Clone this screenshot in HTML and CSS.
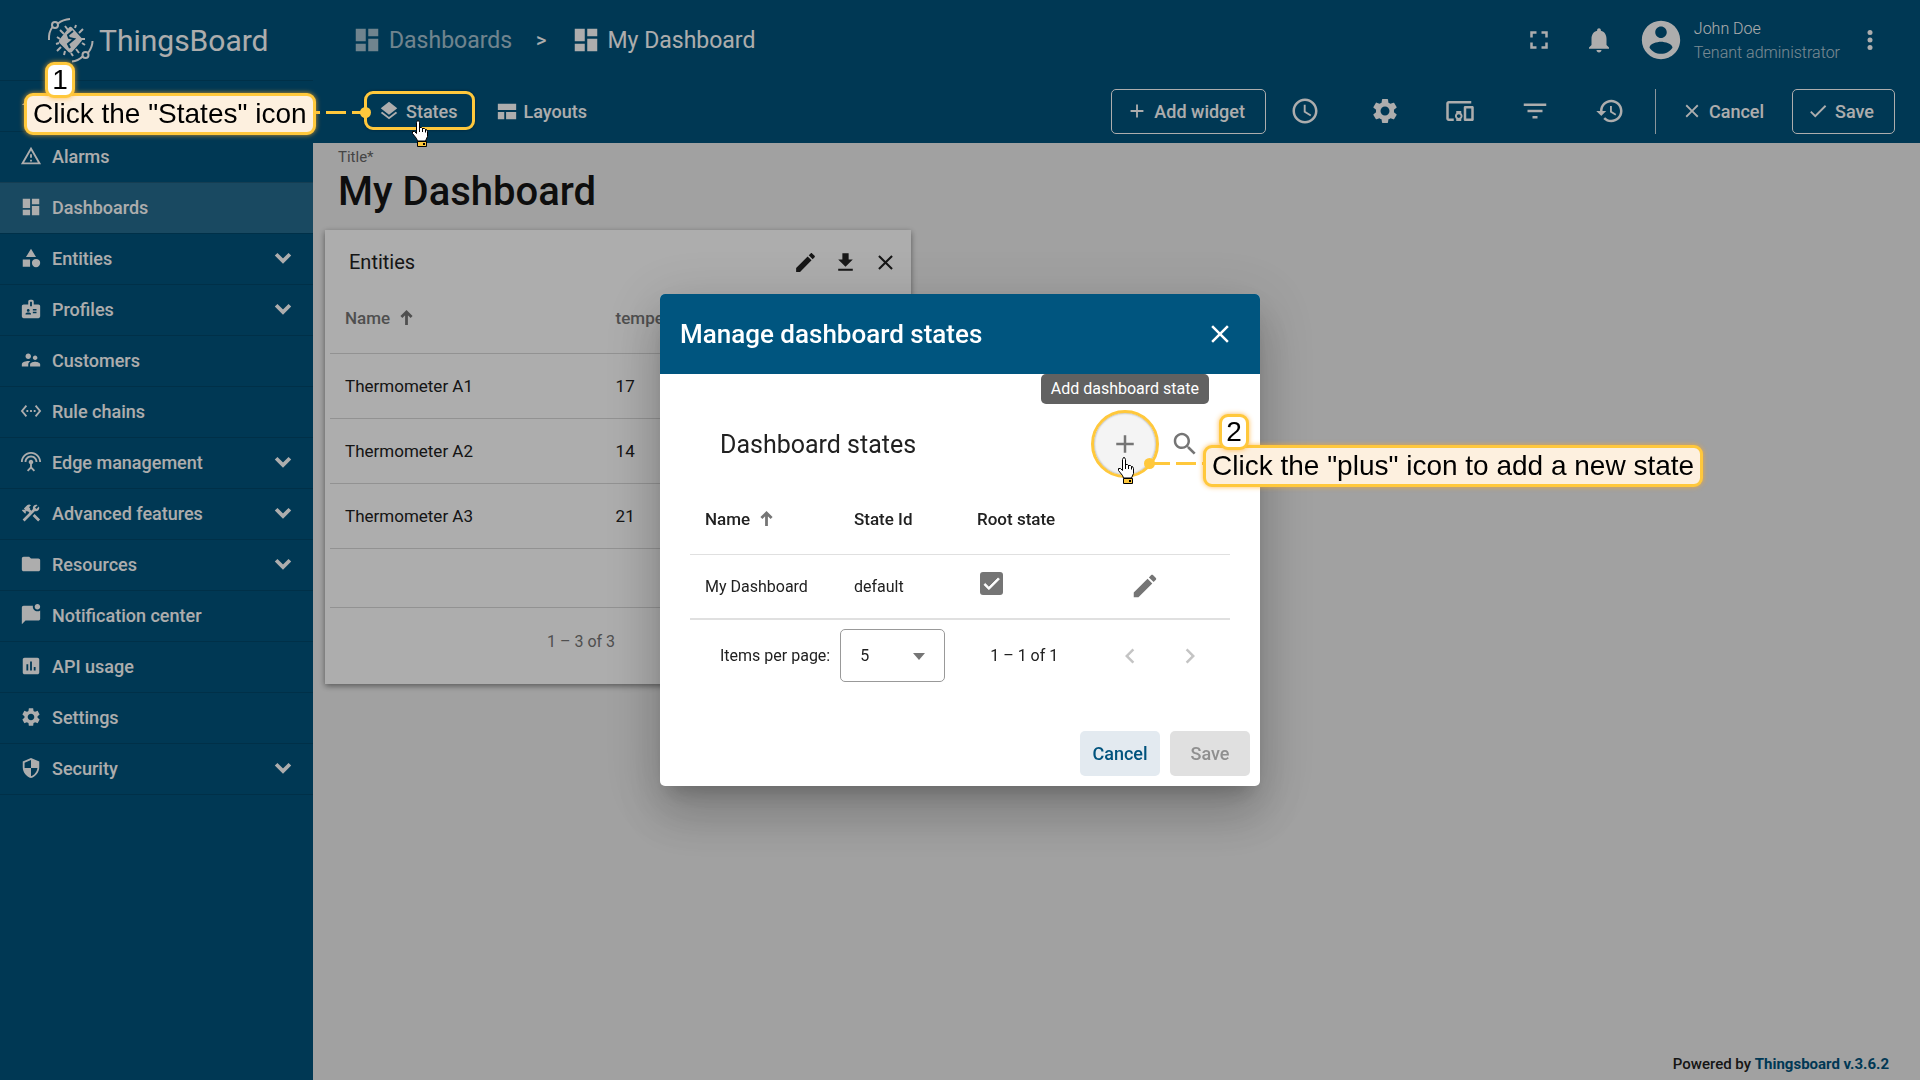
FILE: index.html
```html
<!DOCTYPE html>
<html lang="en">
<head>
  <meta charset="UTF-8">
  <meta name="viewport" content="width=device-width, initial-scale=1.0">
  <title>ThingsBoard | My Dashboard</title>
  <link rel="stylesheet" href="styles.css">
</head>
<body>

  <!-- icon sprite -->
  <svg class="sprite" aria-hidden="true">
    <symbol id="i-home" viewBox="0 0 24 24"><path d="M10 20v-6h4v6h5v-8h3L12 3 2 12h3v8z"/></symbol>
    <symbol id="i-alarm" viewBox="0 0 24 24"><path d="M12 5.99L19.53 19H4.47L12 5.99M12 2L1 21h22L12 2zm1 14h-2v2h2v-2zm0-6h-2v4h2v-4z"/></symbol>
    <symbol id="i-dashboard" viewBox="0 0 24 24"><path d="M3 13h8V3H3v10zm0 8h8v-6H3v6zm10 0h8V11h-8v10zm0-18v6h8V3h-8z"/></symbol>
    <symbol id="i-category" viewBox="0 0 24 24"><path d="M12 2l-5.5 9h11zM3 13.5h8v8H3z"/><circle cx="17.5" cy="17.5" r="4.5"/></symbol>
    <symbol id="i-badge" viewBox="0 0 24 24"><path d="M20 7h-5V4c0-1.1-.9-2-2-2h-2c-1.1 0-2 .9-2 2v3H4c-1.1 0-2 .9-2 2v11c0 1.1.9 2 2 2h16c1.1 0 2-.9 2-2V9c0-1.1-.9-2-2-2zM9 12c.83 0 1.5.67 1.5 1.5S9.83 15 9 15s-1.5-.67-1.5-1.5S8.17 12 9 12zm3 6H6v-.75c0-1 2-1.5 3-1.5s3 .5 3 1.5V18zm1-9h-2V4h2v5zm5 7.5h-4V15h4v1.5zm0-3h-4V12h4v1.5z"/></symbol>
    <symbol id="i-customers" viewBox="0 0 24 24"><path d="M16.5 12c1.38 0 2.49-1.12 2.49-2.5S17.88 7 16.5 7C15.12 7 14 8.12 14 9.5s1.12 2.5 2.5 2.5zM9 11c1.66 0 2.99-1.34 2.99-3S10.66 5 9 5C7.34 5 6 6.34 6 8s1.34 3 3 3zm7.5 3c-1.83 0-5.5.92-5.5 2.75V19h11v-2.25c0-1.83-3.67-2.75-5.5-2.75zM9 13c-2.33 0-7 1.17-7 3.5V19h7v-2.25c0-.85.33-2.34 2.37-3.47C10.5 13.1 9.66 13 9 13z"/></symbol>
    <symbol id="i-rules" viewBox="0 0 24 24"><path d="M7.77 6.76L6.23 5.48.82 12l5.41 6.52 1.54-1.28L3.42 12l4.35-5.24zM7 13h2v-2H7v2zm10-2h-2v2h2v-2zm-6 2h2v-2h-2v2zm6.77-7.52l-1.54 1.28L20.58 12l-4.35 5.24 1.54 1.28L23.18 12l-5.41-6.52z"/></symbol>
    <symbol id="i-antenna" viewBox="0 0 24 24"><path d="M12 5c-3.87 0-7 3.13-7 7h2c0-2.76 2.24-5 5-5s5 2.24 5 5h2c0-3.87-3.13-7-7-7zm1 9.29c.88-.39 1.5-1.26 1.5-2.29 0-1.38-1.12-2.5-2.5-2.5S9.5 10.62 9.5 12c0 1.02.62 1.9 1.5 2.29v3.3L7.59 21 9 22.41l3-3 3 3L16.41 21 13 17.59v-3.3zM12 1C5.93 1 1 5.93 1 12h2c0-4.97 4.03-9 9-9s9 4.03 9 9h2c0-6.07-4.93-11-11-11z"/></symbol>
    <symbol id="i-tools" viewBox="0 0 24 24"><path d="M13.78 15.17l2.12-2.12 6 6-2.12 2.12zM17.5 10c1.93 0 3.5-1.57 3.5-3.5 0-.58-.16-1.12-.41-1.6l-2.7 2.7-1.49-1.49 2.7-2.7c-.48-.25-1.02-.41-1.6-.41C15.57 3 14 4.57 14 6.5c0 .41.08.8.21 1.16l-1.85 1.85-1.78-1.78.71-.71-1.41-1.41L12 3.49c-1.17-1.17-3.07-1.17-4.24 0L4.22 7.03l1.41 1.41H2.81l-.71.71 3.54 3.54.71-.71V9.15l1.41 1.41.71-.71 1.78 1.78-7.41 7.41 2.12 2.12L16.34 9.79c.36.13.75.21 1.16.21z"/></symbol>
    <symbol id="i-folder" viewBox="0 0 24 24"><path d="M10 4H4c-1.1 0-1.99.9-1.99 2L2 18c0 1.1.9 2 2 2h16c1.1 0 2-.9 2-2V8c0-1.1-.9-2-2-2h-8l-2-2z"/></symbol>
    <symbol id="i-notification" viewBox="0 0 24 24"><path d="M22 6.98V16c0 1.1-.9 2-2 2H6l-4 4V4c0-1.1.9-2 2-2h10.1c-.06.32-.1.66-.1 1 0 2.76 2.24 5 5 5 1.13 0 2.16-.39 3-1.02zM16 3c0 1.66 1.34 3 3 3s3-1.34 3-3-1.34-3-3-3-3 1.34-3 3z"/></symbol>
    <symbol id="i-chart" viewBox="0 0 24 24"><path d="M19 3H5c-1.1 0-2 .9-2 2v14c0 1.1.9 2 2 2h14c1.1 0 2-.9 2-2V5c0-1.1-.9-2-2-2zM9 17H7v-7h2v7zm4 0h-2V7h2v10zm4 0h-2v-4h2v4z"/></symbol>
    <symbol id="i-settings" viewBox="0 0 24 24"><path d="M19.14 12.94c.04-.3.06-.61.06-.94 0-.32-.02-.64-.07-.94l2.03-1.58c.18-.14.23-.41.12-.61l-1.92-3.32c-.12-.22-.37-.29-.59-.22l-2.39.96c-.5-.38-1.03-.7-1.62-.94l-.36-2.54c-.04-.24-.24-.41-.48-.41h-3.84c-.24 0-.43.17-.47.41l-.36 2.54c-.59.24-1.13.57-1.62.94l-2.39-.96c-.22-.08-.47 0-.59.22L2.74 8.87c-.12.21-.08.47.12.61l2.03 1.58c-.05.3-.09.63-.09.94s.02.64.07.94l-2.03 1.58c-.18.14-.23.41-.12.61l1.92 3.32c.12.22.37.29.59.22l2.39-.96c.5.38 1.03.7 1.62.94l.36 2.54c.05.24.24.41.48.41h3.84c.24 0 .44-.17.47-.41l.36-2.54c.59-.24 1.13-.56 1.62-.94l2.39.96c.22.08.47 0 .59-.22l1.92-3.32c.12-.22.07-.47-.12-.61l-2.01-1.58zM12 15.6c-1.98 0-3.6-1.62-3.6-3.6s1.62-3.6 3.6-3.6 3.6 1.62 3.6 3.6-1.62 3.6-3.6 3.6z"/></symbol>
    <symbol id="i-security" viewBox="0 0 24 24"><path d="M12 1L3 5v6c0 5.55 3.84 10.74 9 12 5.16-1.26 9-6.45 9-12V5l-9-4zm0 10.99h7c-.53 4.12-3.28 7.79-7 8.94V12H5V6.3l7-3.11v8.8z"/></symbol>
    <symbol id="i-expand" viewBox="0 0 24 24"><path d="M6.5 9l5.5 5.5L17.5 9" fill="none" stroke="currentColor" stroke-width="3"/></symbol>
    <symbol id="i-fullscreen" viewBox="0 0 24 24"><path d="M7 14H5v5h5v-2H7v-3zm-2-4h2V7h3V5H5v5zm12 7h-3v2h5v-5h-2v3zM14 5v2h3v3h2V5h-5z"/></symbol>
    <symbol id="i-bell" viewBox="0 0 24 24"><path d="M12 22c1.1 0 2-.9 2-2h-4c0 1.1.89 2 2 2zm6-6v-5c0-3.07-1.64-5.64-4.5-6.32V4c0-.83-.67-1.5-1.5-1.5s-1.5.67-1.5 1.5v.68C7.63 5.36 6 7.92 6 11v5l-2 2v1h16v-1l-2-2z"/></symbol>
    <symbol id="i-account" viewBox="0 0 24 24"><path d="M12 2C6.48 2 2 6.48 2 12s4.48 10 10 10 10-4.48 10-10S17.52 2 12 2zm0 3c1.66 0 3 1.34 3 3s-1.34 3-3 3-3-1.34-3-3 1.34-3 3-3zm0 14.2c-2.5 0-4.71-1.28-6-3.22.03-1.99 4-3.08 6-3.08 1.99 0 5.97 1.09 6 3.08-1.29 1.94-3.5 3.22-6 3.22z"/></symbol>
    <symbol id="i-more" viewBox="0 0 24 24"><circle cx="12" cy="6" r="2"/><circle cx="12" cy="12" r="2"/><circle cx="12" cy="18" r="2"/></symbol>
    <symbol id="i-layers" viewBox="0 0 24 24"><path d="M11.99 18.54l-7.37-5.73L3 14.07l9 7 9-7-1.63-1.27-7.38 5.74zM12 16l7.36-5.73L21 9l-9-7-9 7 1.63 1.27L12 16z"/></symbol>
    <symbol id="i-layout" viewBox="0 0 24 24"><path d="M2 4h20v7H2zM2 13h7v8H2zM11 13h11v8H11z"/></symbol>
    <symbol id="i-add" viewBox="0 0 24 24"><path d="M19 13h-6v6h-2v-6H5v-2h6V5h2v6h6v2z"/></symbol>
    <symbol id="i-clock" viewBox="0 0 24 24"><path d="M11.99 2C6.47 2 2 6.48 2 12s4.47 10 9.99 10C17.52 22 22 17.52 22 12S17.52 2 11.99 2zM12 20c-4.42 0-8-3.58-8-8s3.58-8 8-8 8 3.58 8 8-3.58 8-8 8zm.5-13H11v6l5.25 3.15.75-1.23-4.5-2.67z"/></symbol>
    <symbol id="i-devices" viewBox="0 0 24 24"><path d="M3 6h18V4H3c-1.1 0-2 .9-2 2v12c0 1.1.9 2 2 2h4v-2H3V6zm10 6H9v1.78c-.61.55-1 1.33-1 2.22s.39 1.67 1 2.22V20h4v-1.78c.61-.55 1-1.34 1-2.22s-.39-1.67-1-2.22V12zm-2 5.5c-.83 0-1.5-.67-1.5-1.5s.67-1.5 1.5-1.5 1.5.67 1.5 1.5-.67 1.5-1.5 1.5zM22 8h-6c-.5 0-1 .5-1 1v10c0 .5.5 1 1 1h6c.5 0 1-.5 1-1V9c0-.5-.5-1-1-1zm-1 10h-4v-8h4v8z"/></symbol>
    <symbol id="i-filter" viewBox="0 0 24 24"><path d="M10 18h4v-2h-4v2zM3 6v2h18V6H3zm3 7h12v-2H6v2z"/></symbol>
    <symbol id="i-history" viewBox="0 0 24 24"><path d="M13 3c-4.97 0-9 4.03-9 9H1l3.89 3.89.07.14L9 12H6c0-3.87 3.13-7 7-7s7 3.13 7 7-3.13 7-7 7c-1.93 0-3.68-.79-4.94-2.06l-1.42 1.42C8.27 19.99 10.51 21 13 21c4.97 0 9-4.03 9-9s-4.03-9-9-9zm-1 5v5l4.28 2.54.72-1.21-3.5-2.08V8H12z"/></symbol>
    <symbol id="i-close" viewBox="0 0 24 24"><path d="M19 6.41L17.59 5 12 10.59 6.41 5 5 6.41 10.59 12 5 17.59 6.41 19 12 13.41 17.59 19 19 17.59 13.41 12z"/></symbol>
    <symbol id="i-check" viewBox="0 0 24 24"><path d="M9 16.17L4.83 12l-1.42 1.41L9 19 21 7l-1.41-1.41z"/></symbol>
    <symbol id="i-edit" viewBox="0 0 24 24"><path d="M3 17.25V21h3.75L17.81 9.94l-3.75-3.75L3 17.25zM20.71 7.04c.39-.39.39-1.02 0-1.41l-2.34-2.34c-.39-.39-1.02-.39-1.41 0l-1.83 1.83 3.75 3.75 1.83-1.83z"/></symbol>
    <symbol id="i-download" viewBox="0 0 24 24"><path d="M19 9h-4V3H9v6H5l7 7 7-7zM5 18v2h14v-2H5z"/></symbol>
    <symbol id="i-search" viewBox="0 0 24 24"><path d="M15.5 14h-.79l-.28-.27C15.41 12.59 16 11.11 16 9.5 16 5.91 13.09 3 9.5 3S3 5.91 3 9.5 5.91 16 9.5 16c1.61 0 3.09-.59 4.23-1.57l.27.28v.79l5 4.99L20.49 19l-4.99-5zm-6 0C7.01 14 5 11.99 5 9.5S7.01 5 9.5 5 14 7.01 14 9.5 11.99 14 9.5 14z"/></symbol>
    <symbol id="i-sort" viewBox="0 0 14 18"><path d="M7 17V3M1.5 8.5L7 3l5.5 5.5" fill="none" stroke="currentColor" stroke-width="3"/></symbol>
    <symbol id="i-prev" viewBox="0 0 24 24"><path d="M15.41 7.41L14 6l-6 6 6 6 1.41-1.41L10.83 12z"/></symbol>
    <symbol id="i-next" viewBox="0 0 24 24"><path d="M10 6L8.59 7.41 13.17 12l-4.58 4.59L10 18l6-6z"/></symbol>
    <symbol id="i-pointer" viewBox="0 0 18 28">
      <path d="M5.5 13.5v-11l1-2h1l1 2v5h2l1 1h2l1 1h1l1 2v5l-2 4.500h-8l-1-2.500-4-5v-2h2z" fill="#fff" stroke="#000"/>
      <path d="M8.5 7v5M11.5 8v4M14.5 9.500v3" stroke="#000"/>
      <path d="M6.500 21.500h9v5h-9z" fill="#ffc83c" stroke="#000"/>
      <path d="M12 23h2v2h-2z" fill="#000"/>
    </symbol>
  </svg>

  <div class="app">
    <aside class="sidebar">
      <a class="logo" href="#">
        <svg viewBox="0 0 48 48">
          <g fill="none" stroke="currentColor" stroke-width="2">
            <circle cx="8" cy="9" r="3"/>
            <path d="M11 7.5Q16 3.500 23 3M5.500 11Q1.500 16 2 24"/>
            <circle cx="38.500" cy="39" r="3"/>
            <path d="M45.500 25Q45.500 31 41 37M35.500 40.500Q31 45 25 45.500"/>
            <path d="M21 14l-3-4M17 18l-4-4M13 23l-3-2M28 12l1-3M32 17l4-4M34 23l4 0M35 27l3 2M14 31l-4 4M12 27l-3 1M18 35l-1 4M24 37l2 3M29 33l3 4"/>
          </g>
          <path d="M22 11.500q1.500-1.500 3 0l9.500 10.500q1.500 2-.3 3.500L25 36q-2 1.500-3.500 0L12.500 27q-1.500-1.500 0-3.500z"/>
          <path d="M26 15l-5 4 1 3 5 1-6 5 2 4" fill="none" stroke="#00537d" stroke-width="2"/>
        </svg>
        <span>ThingsBoard</span>
      </a>
      <nav class="menu">
        <a href="#"><svg class="icon-sm"><use href="#i-home"/></svg>Home</a>
        <a href="#"><svg class="icon-sm"><use href="#i-alarm"/></svg>Alarms</a>
        <a href="#" class="active"><svg class="icon-sm"><use href="#i-dashboard"/></svg>Dashboards</a>
        <a href="#"><svg class="icon-sm"><use href="#i-category"/></svg>Entities<svg class="icon expand"><use href="#i-expand"/></svg></a>
        <a href="#"><svg class="icon-sm"><use href="#i-badge"/></svg>Profiles<svg class="icon expand"><use href="#i-expand"/></svg></a>
        <a href="#"><svg class="icon-sm"><use href="#i-customers"/></svg>Customers</a>
        <a href="#"><svg class="icon-sm"><use href="#i-rules"/></svg>Rule chains</a>
        <a href="#"><svg class="icon-sm"><use href="#i-antenna"/></svg>Edge management<svg class="icon expand"><use href="#i-expand"/></svg></a>
        <a href="#"><svg class="icon-sm"><use href="#i-tools"/></svg>Advanced features<svg class="icon expand"><use href="#i-expand"/></svg></a>
        <a href="#"><svg class="icon-sm"><use href="#i-folder"/></svg>Resources<svg class="icon expand"><use href="#i-expand"/></svg></a>
        <a href="#"><svg class="icon-sm"><use href="#i-notification"/></svg>Notification center</a>
        <a href="#"><svg class="icon-sm"><use href="#i-chart"/></svg>API usage</a>
        <a href="#"><svg class="icon-sm"><use href="#i-settings"/></svg>Settings</a>
        <a href="#"><svg class="icon-sm"><use href="#i-security"/></svg>Security<svg class="icon expand"><use href="#i-expand"/></svg></a>
      </nav>
    </aside>

    <div class="main">
      <header class="topbar">
        <nav class="breadcrumb">
          <a href="#" class="parent"><svg class="icon"><use href="#i-dashboard"/></svg>Dashboards</a>
          <span class="separator">&gt;</span>
          <a href="#"><svg class="icon"><use href="#i-dashboard"/></svg>My Dashboard</a>
        </nav>
        <div class="user-area">
          <button class="icon-btn" aria-label="Fullscreen"><svg class="icon"><use href="#i-fullscreen"/></svg></button>
          <button class="icon-btn" aria-label="Notifications"><svg class="icon"><use href="#i-bell"/></svg></button>
          <svg class="avatar"><use href="#i-account"/></svg>
          <div class="user">
            <span>John Doe</span>
            <span class="role">Tenant administrator</span>
          </div>
          <button class="icon-btn more" aria-label="User menu"><svg class="icon"><use href="#i-more"/></svg></button>
        </div>
      </header>

      <div class="toolbar">
        <div class="toolbar-left">
          <button class="btn"><svg class="icon-sm"><use href="#i-layers"/></svg>States</button>
          <button class="btn"><svg class="icon-sm"><use href="#i-layout"/></svg>Layouts</button>
        </div>
        <div class="toolbar-right">
          <button class="btn outlined"><svg class="icon-sm"><use href="#i-add"/></svg>Add widget</button>
          <button class="tool time" aria-label="Time window"><svg class="icon"><use href="#i-clock"/></svg></button>
          <button class="tool" aria-label="Settings"><svg class="icon"><use href="#i-settings"/></svg></button>
          <button class="tool" aria-label="Entity aliases"><svg class="icon"><use href="#i-devices"/></svg></button>
          <button class="tool" aria-label="Filters"><svg class="icon"><use href="#i-filter"/></svg></button>
          <button class="tool" aria-label="Version control"><svg class="icon"><use href="#i-history"/></svg></button>
          <span class="divider"></span>
          <button class="btn cancel"><svg class="icon-sm"><use href="#i-close"/></svg>Cancel</button>
          <button class="btn outlined"><svg class="icon-sm"><use href="#i-check"/></svg>Save</button>
        </div>
      </div>

      <main class="content">
        <div class="title-field">
          <span>Title*</span>
          <h1>My Dashboard</h1>
        </div>
        <section class="widget">
          <div class="widget-header">
            <h2>Entities</h2>
            <button aria-label="Edit widget"><svg><use href="#i-edit"/></svg></button>
            <button aria-label="Export widget"><svg><use href="#i-download"/></svg></button>
            <button aria-label="Remove widget"><svg><use href="#i-close"/></svg></button>
          </div>
          <table>
            <thead>
              <tr><th>Name <svg class="sort"><use href="#i-sort"/></svg></th><th>temperature</th></tr>
            </thead>
            <tbody>
              <tr><td>Thermometer A1</td><td>17</td></tr>
              <tr><td>Thermometer A2</td><td>14</td></tr>
              <tr><td>Thermometer A3</td><td>21</td></tr>
            </tbody>
          </table>
          <div class="widget-footer">1 – 3 of 3</div>
        </section>
      </main>

      <footer>Powered by <a href="#">Thingsboard v.3.6.2</a></footer>
    </div>
  </div>

  <div class="backdrop">
    <div class="dialog" role="dialog" aria-labelledby="dialog-title">
      <div class="dialog-header">
        <h2 id="dialog-title">Manage dashboard states</h2>
        <button aria-label="Close"><svg class="icon"><use href="#i-close"/></svg></button>
      </div>
      <div class="dialog-body">
        <div class="states-header">
          <h3>Dashboard states</h3>
          <button class="round hovered" aria-label="Add dashboard state"><svg class="icon"><use href="#i-add"/></svg></button>
          <button class="round" aria-label="Search"><svg class="icon"><use href="#i-search"/></svg></button>
        </div>
        <table>
          <colgroup><col class="col-name"><col class="col-id"><col class="col-root"><col></colgroup>
          <thead>
            <tr><th>Name <svg class="sort"><use href="#i-sort"/></svg></th><th>State Id</th><th>Root state</th><th></th></tr>
          </thead>
          <tbody>
            <tr>
              <td>My Dashboard</td>
              <td>default</td>
              <td><label class="check"><input type="checkbox" aria-label="Root state" checked><svg><use href="#i-check"/></svg></label></td>
              <td><button class="edit" aria-label="Edit state"><svg class="icon"><use href="#i-edit"/></svg></button></td>
            </tr>
          </tbody>
        </table>
        <div class="paginator">
          <label for="page-size">Items per page:</label>
          <div class="select">
            <select id="page-size"><option>5</option><option>10</option><option>15</option></select>
          </div>
          <span class="range">1 – 1 of 1</span>
          <button class="round" aria-label="Previous page" disabled><svg class="icon"><use href="#i-prev"/></svg></button>
          <button class="round" aria-label="Next page" disabled><svg class="icon"><use href="#i-next"/></svg></button>
        </div>
      </div>
      <div class="dialog-actions">
        <button class="dialog-btn">Cancel</button>
        <button class="dialog-btn" disabled>Save</button>
      </div>

      <div class="tooltip">Add dashboard state</div>
      <div class="ring"></div>
      <div class="line line-plus"></div>
      <div class="callout callout-plus">
        <span class="number">2</span>
        Click the "plus" icon to add a new state
      </div>
      <svg class="pointer pointer-plus"><use href="#i-pointer"/></svg>
    </div>
  </div>

  <!-- step 1 hint -->
  <div class="frame"></div>
  <div class="line line-states"></div>
  <div class="callout callout-states">
    <span class="number">1</span>
    Click the "States" icon
  </div>
  <svg class="pointer pointer-states"><use href="#i-pointer"/></svg>

</body>
</html>
```
FILE: styles.css
```css
* {
  margin: 0;
  padding: 0;
  box-sizing: border-box;
}

body {
  font-family: Roboto, sans-serif;
  font-size: 16px;
  color: #212121;
  background: #eee;
}

button {
  font: inherit;
  color: inherit;
  background: none;
  border: none;
  cursor: pointer;
}

a {
  color: inherit;
  text-decoration: none;
}

svg {
  display: block;
  flex-shrink: 0;
  fill: currentColor;
}

table {
  width: 100%;
  border-collapse: collapse;
  table-layout: fixed;
}

th {
  text-align: left;
  font-size: 17px;
  font-weight: 500;
}

.sprite {
  position: absolute;
  width: 0;
  height: 0;
}

.icon {
  width: 30px;
  height: 30px;
}

.icon-sm {
  width: 22px;
  height: 22px;
}

.app {
  display: flex;
  min-height: 100vh;
}

/* sidebar */
.sidebar {
  width: 313px;
  flex-shrink: 0;
  background: #00537d;
  color: #fff;
}

.logo {
  display: flex;
  align-items: center;
  gap: 4px;
  height: 80px;
  padding-left: 47px;
  font-size: 30px;
}

.logo svg {
  width: 48px;
  height: 48px;
}

.menu a {
  display: flex;
  align-items: center;
  gap: 10px;
  height: 51px;
  padding: 0 15px 2px 20px;
  border-top: 1px solid rgba(0, 0, 0, 0.14);
  font-size: 18px;
  font-weight: 500;
}

.menu a:last-child {
  height: 52px;
  border-bottom: 1px solid rgba(0, 0, 0, 0.14);
}

.menu .active {
  background: rgba(255, 255, 255, 0.15);
}

.expand {
  margin-left: auto;
}

/* top bars */
.main {
  display: flex;
  flex-direction: column;
  flex: 1;
  min-width: 0;
}

.topbar,
.toolbar {
  display: flex;
  justify-content: space-between;
  align-items: center;
  padding: 0 25px 0 39px;
  background: #00537d;
  color: #fff;
}

.topbar {
  height: 80px;
}

.toolbar {
  height: 63px;
}

.breadcrumb,
.breadcrumb a {
  display: flex;
  align-items: center;
}

.breadcrumb {
  gap: 24px;
  font-size: 23px;
}

.breadcrumb a {
  gap: 7px;
}

.breadcrumb .parent {
  opacity: 0.65;
}

.separator {
  font-size: 20px;
  font-weight: 500;
}

.user-area {
  display: flex;
  align-items: center;
}

.icon-btn {
  width: 60px;
  height: 60px;
  display: grid;
  place-items: center;
}

.avatar {
  width: 46px;
  height: 46px;
  margin: 0 10px 0 9px;
}

.user {
  display: flex;
  flex-direction: column;
  gap: 5px;
  font-size: 16px;
  font-weight: 300;
}

.role {
  opacity: 0.7;
}

.more {
  margin-right: -5px;
}

.toolbar-left,
.toolbar-right {
  display: flex;
  align-items: center;
  height: 100%;
  padding-bottom: 1px;
}

.toolbar-left {
  gap: 38px;
  padding-left: 26px;
}

.btn {
  display: flex;
  align-items: center;
  gap: 6px;
  height: 45px;
  font-size: 18px;
  font-weight: 500;
}

.outlined {
  padding: 0 20px 0 14px;
  border: 1px solid #fff;
  border-radius: 5px;
}

.tool {
  width: 75px;
  height: 60px;
  display: grid;
  place-items: center;
}

.time {
  margin: 0 5px 0 2px;
}

.divider {
  width: 1px;
  height: 45px;
  margin: 0 25px 0 7px;
  background: rgba(255, 255, 255, 0.8);
}

.cancel {
  margin-right: 28px;
}

/* dashboard */
.content {
  flex: 1;
  padding: 5px 12px;
}

.title-field {
  display: flex;
  flex-direction: column;
  padding: 0 13px;
  height: 82px;
  font-size: 15px;
  color: #666;
}

.title-field h1 {
  font-size: 40px;
  font-weight: 500;
  line-height: 52px;
  color: #151515;
}

.widget {
  width: 37%;
  padding: 0 5px 8px;
  background: #fff;
  box-shadow: 0 2px 6px rgba(0, 0, 0, 0.45);
}

.widget-header {
  display: flex;
  align-items: center;
  gap: 15px;
  height: 53px;
  padding: 11px 8px 0 19px;
}

.widget-header h2 {
  flex: 1;
  font-size: 20px;
  font-weight: 400;
}

.widget-header svg {
  width: 25px;
  height: 25px;
}

.widget th,
.widget td {
  padding-left: 15px;
  border-bottom: 1px solid #d8d8d8;
}

.widget th:first-child {
  width: 47%;
}

.widget td {
  font-size: 17px;
}

th {
  height: 70px;
}

td {
  height: 65px;
}

.widget th {
  color: #757575;
}

.sort {
  display: inline-block;
  width: 13px;
  height: 17px;
  margin-left: 6px;
  vertical-align: -2px;
  color: #757575;
}

.widget-footer {
  display: flex;
  align-items: center;
  height: 127px;
  padding: 59px 0 0 217px;
  font-size: 16px;
  color: #757575;
  background: linear-gradient(#d8d8d8, #d8d8d8) 0 58px / 100% 1px no-repeat;
}

footer {
  padding: 0 31px 7px;
  text-align: right;
  font-size: 15px;
  font-weight: 500;
}

footer a {
  color: #00537d;
  font-weight: 700;
}

/* dialog */
.backdrop {
  position: fixed;
  inset: 0;
  display: grid;
  place-items: center;
  background: rgba(0, 0, 0, 0.32);
}

.dialog {
  position: relative;
  width: 600px;
  border-radius: 5px;
  background: #fff;
  box-shadow: 0 14px 19px -9px rgba(0, 0, 0, 0.2), 0 30px 48px 4px rgba(0, 0, 0, 0.14), 0 11px 58px 10px rgba(0, 0, 0, 0.12);
}

.dialog-header {
  display: flex;
  align-items: center;
  justify-content: space-between;
  height: 80px;
  padding: 0 25px 0 20px;
  border-radius: 5px 5px 0 0;
  background: #00557f;
  color: #fff;
}

.dialog-header h2 {
  font-size: 26px;
  font-weight: 500;
}

.dialog-body {
  padding: 30px;
}

.states-header {
  display: flex;
  align-items: center;
  height: 80px;
  padding: 0 15px 0 30px;
}

.states-header h3 {
  flex: 1;
  font-size: 25px;
  font-weight: 400;
}

.round {
  width: 60px;
  height: 60px;
  display: grid;
  place-items: center;
  border-radius: 50%;
  color: #757575;
}

.hovered {
  background: #f4f4f4;
}

.round:disabled {
  color: #c4c4c4;
}

.dialog th,
.dialog td {
  padding-left: 15px;
  border-bottom: 1px solid #e0e0e0;
}

.dialog td {
  border-bottom-width: 2px;
}

.col-name {
  width: 149px;
}

.col-id {
  width: 123px;
}

.col-root {
  width: 153px;
}

.check {
  position: relative;
  display: block;
  width: 23px;
  height: 23px;
  margin: 0 0 5px 3px;
  color: #fff;
}

.check input {
  appearance: none;
  display: block;
  width: 23px;
  height: 23px;
  border-radius: 3px;
  background: #757575;
}

.check svg {
  position: absolute;
  inset: 1px;
  width: 21px;
  height: 21px;
  stroke: currentColor;
}

.edit {
  display: block;
  color: #757575;
}

.paginator {
  display: flex;
  align-items: center;
  height: 71px;
  padding: 0 10px 0 30px;
  font-size: 16px;
}

.select {
  position: relative;
  margin-left: 10px;
}

.select::after {
  content: "";
  position: absolute;
  right: 20px;
  top: 24px;
  border: 6px solid transparent;
  border-top: 7px solid #757575;
  border-bottom: 0;
  pointer-events: none;
}

.select select {
  appearance: none;
  width: 105px;
  height: 53px;
  padding-left: 19px;
  border: 1px solid #999;
  border-radius: 5px;
  background: #fff;
  color: inherit;
  font: inherit;
}

.range {
  flex: 1;
  padding-left: 45px;
}

.dialog-actions {
  display: flex;
  justify-content: flex-end;
  gap: 10px;
  padding: 10px;
}

.dialog-btn {
  width: 80px;
  height: 45px;
  border-radius: 5px;
  background: #e3eaf0;
  color: #00537d;
  font-size: 18px;
  font-weight: 500;
}

.dialog-btn:disabled {
  background: #e0e0e0;
  color: #8f8f8f;
}

.tooltip {
  position: absolute;
  right: 51px;
  top: 80px;
  padding: 0 10px;
  border-radius: 5px;
  background: #616161;
  color: #fff;
  font-size: 16px;
  line-height: 30px;
}

/* hints */
.ring {
  position: absolute;
  right: 101px;
  top: 116px;
  width: 68px;
  height: 68px;
  border: 3px solid #ffc83c;
  border-radius: 50%;
  box-shadow: inset 0 0 2px rgba(0, 0, 0, 0.6);
}

.frame {
  position: absolute;
  left: 364px;
  top: 91px;
  width: 111px;
  height: 39px;
  border: 3px solid #ffc83c;
  border-radius: 9px;
  box-shadow: 0 0 3px rgba(0, 0, 0, 0.4);
}

.line {
  position: absolute;
  height: 3px;
  background: repeating-linear-gradient(90deg, #ffc83c 0 20px, transparent 20px 26px);
}

.line::after {
  content: "";
  position: absolute;
  top: -4px;
  width: 11px;
  height: 11px;
  border-radius: 50%;
  background: #ffc83c;
}

.line-states {
  left: 300px;
  top: 111px;
  width: 65px;
}

.line-states::after {
  right: -6px;
}

.line-plus {
  left: 490px;
  top: 168px;
  width: 60px;
}

.line-plus::after {
  left: -6px;
}

.callout {
  position: absolute;
  padding: 0 6px;
  border: 3px solid #ffc83c;
  border-radius: 9px;
  background: #fdf0df;
  box-shadow: 0 0 5px rgba(255, 170, 40, 0.8);
  color: #000;
  font-family: "Liberation Sans", Arial, sans-serif;
  font-size: 28px;
  line-height: 36px;
  white-space: nowrap;
}

.callout-states {
  left: 24px;
  top: 93px;
}

.callout-plus {
  left: 543px;
  top: 151px;
}

.number {
  position: absolute;
  left: 18px;
  bottom: 34px;
  width: 30px;
  border: 3px solid #ffc83c;
  border-radius: 9px;
  background: #fff;
  box-shadow: 0 0 5px rgba(255, 170, 40, 0.8);
  line-height: 30px;
  text-align: center;
}

.callout-plus .number {
  left: 13px;
}

.pointer {
  position: absolute;
  width: 18px;
  height: 28px;
}

.pointer-states {
  left: 411px;
  top: 120px;
}

.pointer-plus {
  left: 457px;
  top: 163px;
}
```
